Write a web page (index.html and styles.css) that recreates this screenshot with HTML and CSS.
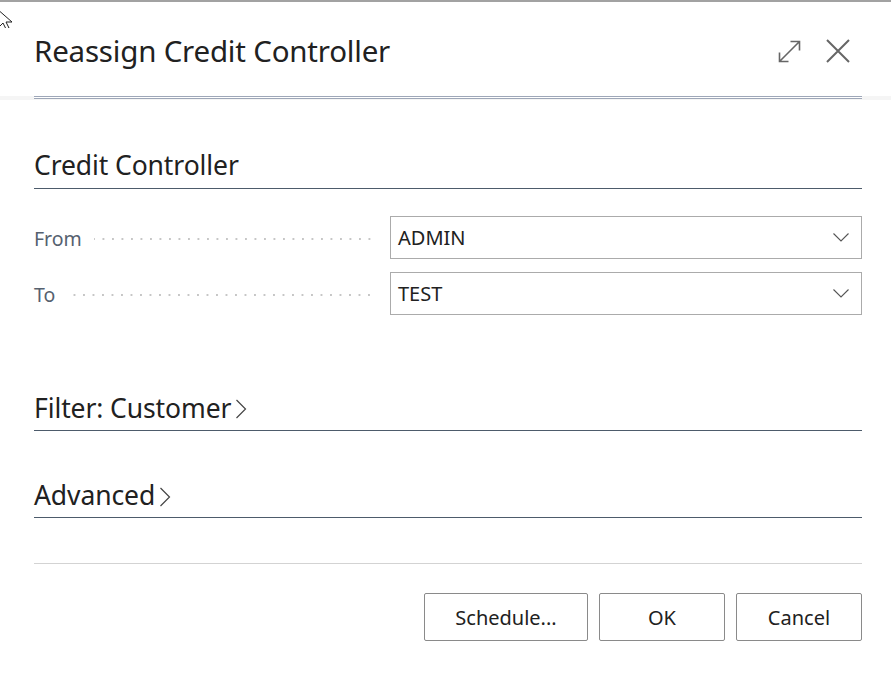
FILE: index.html
```html
<!DOCTYPE html>
<html>
<head>
<meta charset="utf-8">
<link rel="stylesheet" href="styles.css">
</head>
<body>
<div class="topline"></div>
<svg class="cursor" width="16" height="26" viewBox="0 0 16 26"><path d="M-4 6 L12 20 L6 20 L9 26 L6 27 L3 21 L-1 25 Z" fill="#fff" stroke="#222" stroke-width="1"/></svg>
<header class="header">
  <h1 class="title">Reassign Credit Controller</h1>
  <div class="tools">
    <svg class="icon" width="23" height="23" viewBox="0 0 23 23"><path d="M1.5 21.5 L21.5 1.5 M12.5 1.5 H21.5 V10.5 M1.5 12.5 V21.5 H10.5" fill="none" stroke="#666" stroke-width="1.6"/></svg>
    <svg class="icon close" width="24" height="24" viewBox="0 0 24 24"><path d="M1 1 L23 23 M23 1 L1 23" fill="none" stroke="#666" stroke-width="2"/></svg>
  </div>
</header>
<div class="rulewrap"><div class="rule"></div></div>
<main class="content">
  <section class="group">
    <h2 class="ghead">Credit Controller</h2>
    <div class="row">
      <div class="label"><span>From</span><span class="leader"></span></div>
      <div class="select"><span>ADMIN</span><svg width="16" height="9" viewBox="0 0 16 9"><path d="M0.5 0.5 L8 8 L15.5 0.5" fill="none" stroke="#555" stroke-width="1.1"/></svg></div>
    </div>
    <div class="row">
      <div class="label"><span>To</span><span class="leader"></span></div>
      <div class="select"><span>TEST</span><svg width="16" height="9" viewBox="0 0 16 9"><path d="M0.5 0.5 L8 8 L15.5 0.5" fill="none" stroke="#555" stroke-width="1.1"/></svg></div>
    </div>
  </section>
  <section class="group collapsed first">
    <h2 class="ghead">Filter: Customer<svg class="chev" width="12" height="20" viewBox="0 0 12 20"><path d="M1.5 1 L10.5 10 L1.5 19" fill="none" stroke="#444" stroke-width="1.2"/></svg></h2>
  </section>
  <section class="group collapsed">
    <h2 class="ghead">Advanced<svg class="chev" width="12" height="20" viewBox="0 0 12 20"><path d="M1.5 1 L10.5 10 L1.5 19" fill="none" stroke="#444" stroke-width="1.2"/></svg></h2>
  </section>
  <div class="footer">
    <button class="btn sched">Schedule...</button>
    <button class="btn ok">OK</button>
    <button class="btn cancel">Cancel</button>
  </div>
</main>
</body>
</html>
```
FILE: styles.css
```css
* { box-sizing: border-box; }
html, body { margin: 0; padding: 0; background: #fff; }
body {
  font-family: "Noto Sans", "Open Sans", sans-serif;
  color: #212121;
  width: 891px;
  height: 674px;
  overflow: hidden;
  position: relative;
}
.topline { height: 2px; background: #a2a2a2; }
.cursor { position: absolute; left: 0; top: 2px; }
.header {
  height: 94px;
  display: flex;
  align-items: center;
  justify-content: space-between;
  padding: 0 41px 0 34px;
}
.title {
  margin: 0;
  font-size: 29.5px;
  font-weight: 400;
  letter-spacing: -0.2px;
  color: #212121;
  padding-top: 2px;
}
.tools { display: flex; align-items: center; gap: 25px; padding-top: 4px; }
.icon { display: block; }
.rulewrap { background: #f5f5f5; height: 4px; padding: 0 29px 0 34px; }
.rule { height: 3px; border-top: 1px solid #9ea7b8; border-bottom: 1px solid #9ea7b8; background: #fff; }
.content { padding: 0 29px 0 34px; }
.ghead {
  margin: 0;
  font-size: 26.5px;
  font-weight: 400;
  color: #212121;
  border-bottom: 1px solid #4d5b6b;
  display: flex;
  align-items: center;
  height: 89px;
  padding-top: 50px;
  padding-bottom: 8px;
  letter-spacing: -0.1px;
}
.chev { margin-left: 4px; margin-top: 3px; }
.row { display: flex; align-items: center; height: 43px; margin-top: 13px; }
.row:first-of-type { margin-top: 27px; }
.label {
  width: 356px;
  display: flex;
  align-items: center;
  font-size: 19.5px;
  color: #56616f;
  padding-right: 16px;
  padding-top: 1px;
}
.leader {
  flex: 1;
  height: 4px;
  margin-left: 12px;
  margin-top: 2px;
  background-image: radial-gradient(circle, #c6c6c6 0.9px, transparent 1.3px);
  background-size: 9.5px 4px;
  background-repeat: repeat-x;
  background-position: right center;
}
.select {
  flex: 1;
  height: 43px;
  border: 1px solid #ababab;
  display: flex;
  align-items: center;
  justify-content: space-between;
  padding: 0 12px 0 7px;
  font-size: 20px;
  color: #212121;
}
.group.first .ghead { height: 116px; padding-top: 78px; padding-bottom: 8px; }
.group.collapsed:not(.first) .ghead { height: 87px; padding-top: 50px; padding-bottom: 8px; }
.footer {
  margin-top: 45px;
  border-top: 1px solid #d3d3d3;
  display: flex;
  justify-content: flex-end;
  gap: 11px;
  padding-top: 29px;
}
.btn {
  font-family: "Noto Sans", "Open Sans", sans-serif;
  font-size: 20px;
  color: #212121;
  background: #fff;
  border: 1px solid #8a8a8a;
  border-radius: 2px;
  height: 48px;
  padding: 0;
}
.sched { width: 164px; }
.ok { width: 126px; }
.cancel { width: 126px; }
```
